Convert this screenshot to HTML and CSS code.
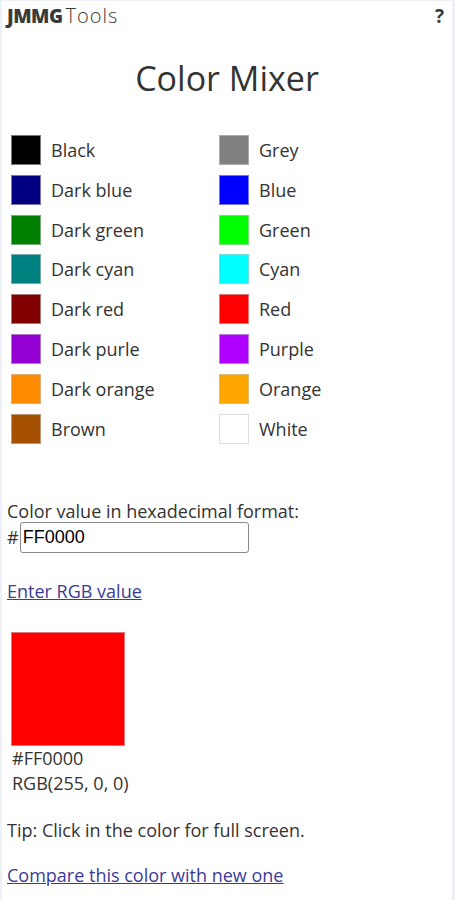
FILE: index.html
```html
<!DOCTYPE html>
<html lang="en">
<head>
    <meta charset="UTF-8">
    <title>Color Mixer - JMMG Tools</title>
    <link rel="stylesheet" href="styles.css">
</head>
<body>
<div class="page">
    <header class="top-bar">
        <span class="brand"><b>JMMG</b><span class="brand-light">Tools</span></span>
        <span class="help">?</span>
    </header>

    <h1>Color Mixer</h1>

    <div class="palette">
        <div class="color-item"><span class="swatch" style="background:#000000"></span>Black</div>
        <div class="color-item"><span class="swatch" style="background:#808080"></span>Grey</div>
        <div class="color-item"><span class="swatch" style="background:#000080"></span>Dark blue</div>
        <div class="color-item"><span class="swatch" style="background:#0000ff"></span>Blue</div>
        <div class="color-item"><span class="swatch" style="background:#008000"></span>Dark green</div>
        <div class="color-item"><span class="swatch" style="background:#00ff00"></span>Green</div>
        <div class="color-item"><span class="swatch" style="background:#008080"></span>Dark cyan</div>
        <div class="color-item"><span class="swatch" style="background:#00ffff"></span>Cyan</div>
        <div class="color-item"><span class="swatch" style="background:#800000"></span>Dark red</div>
        <div class="color-item"><span class="swatch" style="background:#ff0000"></span>Red</div>
        <div class="color-item"><span class="swatch" style="background:#9400d3"></span>Dark purle</div>
        <div class="color-item"><span class="swatch" style="background:#b000ff"></span>Purple</div>
        <div class="color-item"><span class="swatch" style="background:#ff8c00"></span>Dark orange</div>
        <div class="color-item"><span class="swatch" style="background:#ffa500"></span>Orange</div>
        <div class="color-item"><span class="swatch" style="background:#a55000"></span>Brown</div>
        <div class="color-item"><span class="swatch" style="background:#ffffff"></span>White</div>
    </div>

    <div class="hex-block">
        <label for="hex">Color value in hexadecimal format:</label>
        <div class="hex-row">
            <span>#</span>
            <input id="hex" type="text" value="FF0000">
        </div>
    </div>

    <p class="link-line first-link"><a href="#">Enter RGB value</a></p>

    <div class="result">
        <div class="big-swatch"></div>
        <div class="result-text">#FF0000<br>RGB(255, 0, 0)</div>
    </div>

    <p class="tip">Tip: Click in the color for full screen.</p>
    <p class="link-line"><a href="#">Compare this color with new one</a></p>
</div>
</body>
</html>
```

FILE: styles.css
```css
body {
    margin: 0;
    background: #eef0f7;
    font-family: "Open Sans", sans-serif;
    font-size: 18px;
    line-height: 24px;
    color: #333;
}

.page {
    background: #fff;
    margin: 1px 3px 0 2px;
    min-height: 899px;
    padding: 0 5px;
}

.top-bar {
    display: flex;
    justify-content: space-between;
    align-items: center;
    height: 30px;
    font-size: 19px;
    color: #3a3a3a;
}

.brand b {
    font-weight: 800;
    letter-spacing: -0.5px;
}

.brand-light {
    font-size: 20px;
    font-weight: 300;
    letter-spacing: 1px;
    margin-left: 3px;
}

.help {
    font-weight: 700;
    margin-right: 3px;
}

h1 {
    margin: 22px 0 0;
    font-size: 34px;
    font-weight: 400;
    text-align: center;
    line-height: 50px;
}

.palette {
    display: grid;
    grid-template-columns: 208px 208px;
    grid-auto-rows: 39.85px;
    margin: 27px 0 0 4px;
}

.color-item {
    display: flex;
    align-items: center;
    gap: 10px;
}

.swatch {
    width: 30px;
    height: 30px;
    box-sizing: border-box;
    border: 1px solid rgba(200, 200, 200, 0.6);
}

.hex-block {
    margin-top: 50px;
}

.hex-row {
    display: flex;
    align-items: center;
    gap: 1px;
    margin-top: -1px;
}

.hex-row input {
    width: 229px;
    height: 31px;
    box-sizing: border-box;
    border: 1px solid #888;
    border-radius: 3px;
    font-family: "Liberation Sans", Arial, sans-serif;
    font-size: 18px;
    padding: 0 2px;
    color: #000;
}

.link-line {
    margin: 21px 0 0;
}

.first-link {
    margin-top: 26px;
}

.link-line a {
    color: #3b3b98;
}

.result {
    margin-top: 29px;
    padding-left: 4px;
}

.big-swatch {
    width: 114px;
    height: 114px;
    box-sizing: border-box;
    background: #ff0000;
    border: 1px solid rgba(200, 200, 200, 0.6);
}

.result-text {
    line-height: 25px;
    padding-left: 1px;
}

.tip {
    margin: 22px 0 0;
}
```
